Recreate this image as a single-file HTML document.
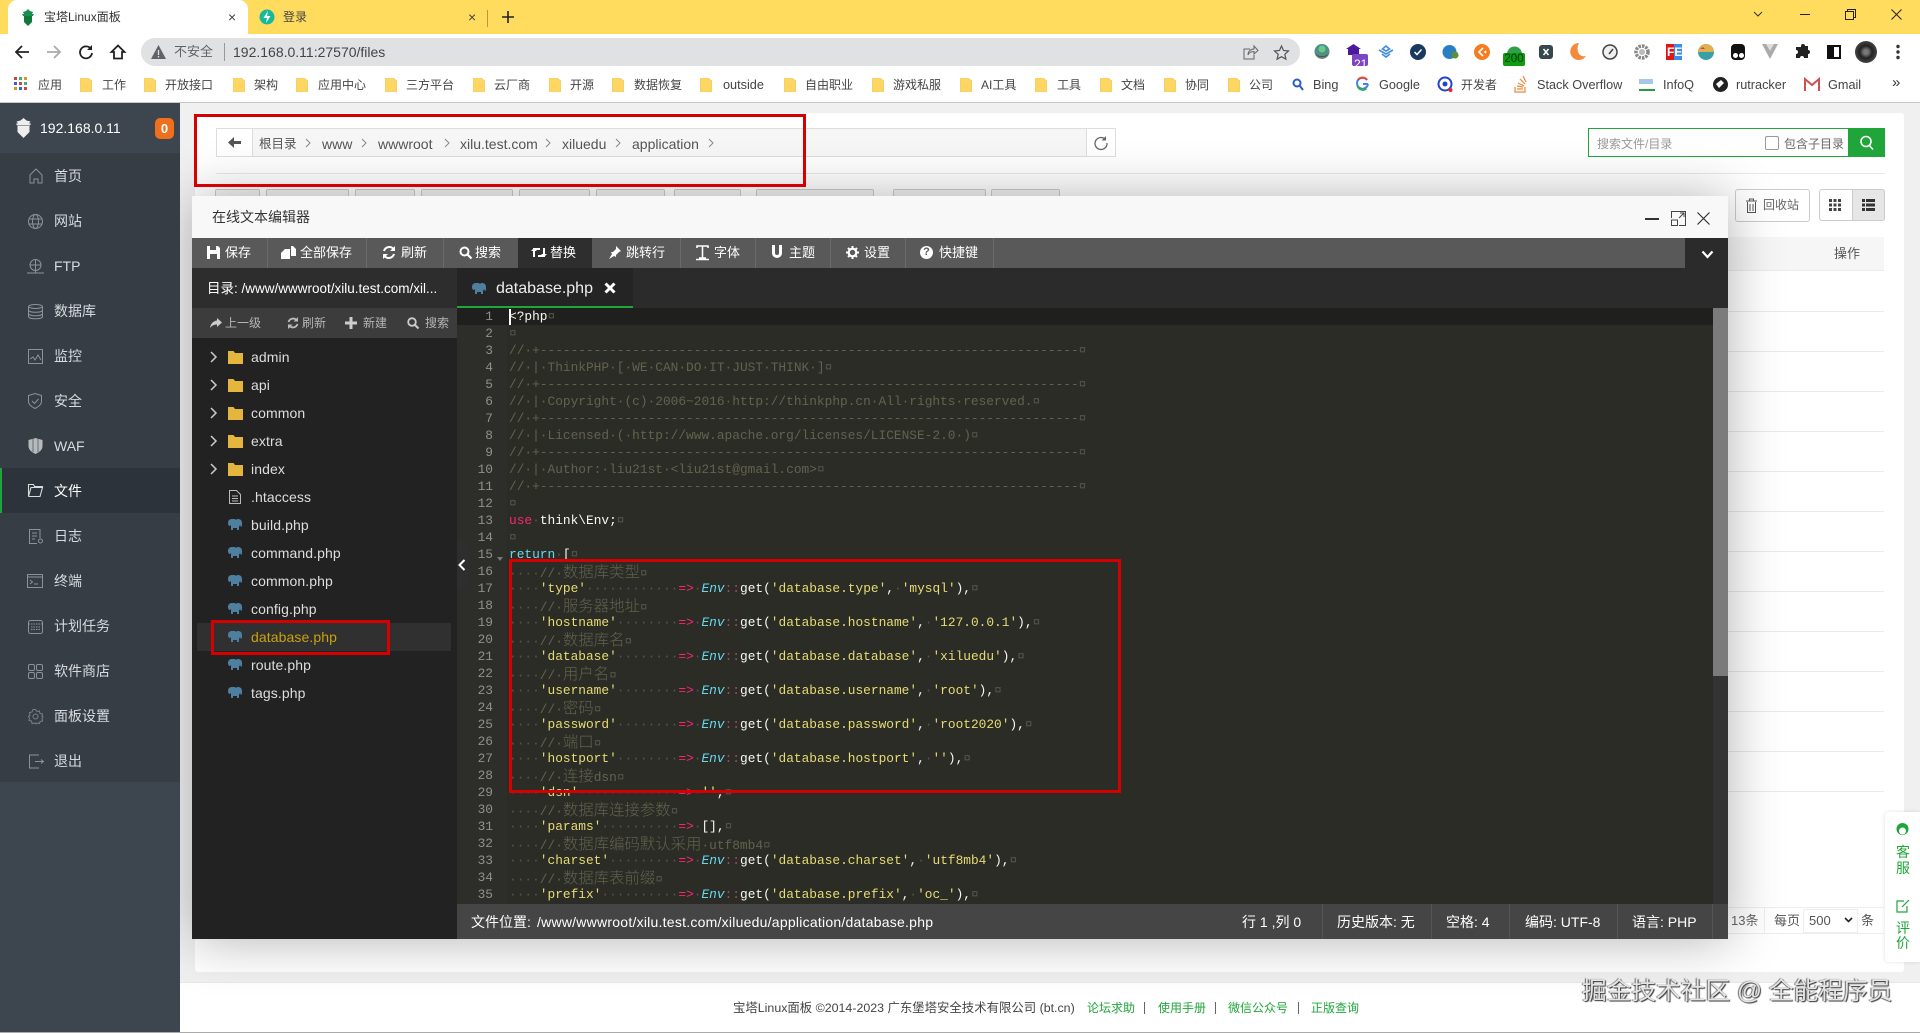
<!DOCTYPE html>
<html lang="zh"><head><meta charset="utf-8"><title>宝塔Linux面板</title>
<style>
*{box-sizing:border-box;margin:0;padding:0}
html,body{width:1920px;height:1033px;overflow:hidden;background:#f0f0f0}
body{position:relative;font:12px/20px "Liberation Sans","Noto Sans CJK SC",sans-serif;color:#333}
.a{position:absolute;white-space:nowrap;line-height:20px}
.r{position:absolute}
svg{position:absolute;overflow:visible}
.side{color:#d8dbde;font-size:14px;left:54px}
.tool{color:#fff;font-size:13px;top:243px}
.act{color:#b5b5b5;font-size:12px;top:313px}
.file{color:#ddd;font-size:14px;left:251px;letter-spacing:.1px}
.sta{color:#fff;font-size:14px;top:912px}
.sep{position:absolute;width:1px;background:#6a6a6a}
.bm{color:#444;font-size:12px;top:75px}
.bl{font-size:12.7px}
.bc{color:#555;font-size:14px;top:134px}
.red{position:absolute;border:3px solid #d60000;z-index:30}
.btn{position:absolute;top:189px;height:12px;border:1px solid #ccc;border-radius:2px;background:#f4f4f4}
.ln{position:absolute;left:1728px;width:156px;height:1px;background:#eaeaea}
#code{position:absolute;left:509px;top:308px;width:1200px;height:596px;overflow:hidden;font:12.84px/17px "Liberation Mono","Noto Sans CJK SC",monospace;color:#f8f8f2;z-index:6}
#code div{height:17px;white-space:pre}
#code i{font-style:normal;color:#54554c}
#code i.v{color:#66d9ef;font-style:italic}
#code .c{color:#63624f}
#code .z{font-size:15.4px;font-family:"Noto Sans CJK SC",sans-serif;line-height:17px;font-weight:300}
#code s{text-decoration:none;color:#e6db74}
#code em{color:#66d9ef;font-style:normal}
#code .k{color:#f92672}
#code .d{color:#a34a66}
#nums{position:absolute;left:457px;top:308px;width:36px;height:596px;overflow:hidden;text-align:right;font:12.84px/17px "Liberation Mono",monospace;color:#8f908a;white-space:pre;z-index:6}
</style></head><body>

<svg width="0" height="0" style="position:absolute"><defs>
<symbol id="fd" viewBox="0 0 12 14"><path d="M0 0h8l4 3v11H0z" fill="#fdd663" stroke="#e9c46a" stroke-width=".6"/></symbol>
<symbol id="yf" viewBox="0 0 15 14"><path d="M0 1h5.500l1.500 2h8v11H0z" fill="#e4b63d"/></symbol>
<symbol id="ph" viewBox="0 0 14 12"><path d="M4 0c-2 0-4 1-4 4 0 2 1 3 2 3l1-1v5h2V9h4v2h2V8l1-2 1 2 1-1V4c0-3-2-4-4-4H9L8 1 7 0z" fill="#4f7f9f"/></symbol>
</defs></svg>

<!-- tab strip -->
<div class="r" style="left:0;top:0;width:1920px;height:34px;background:#ffdc5e"></div>
<div class="r" style="left:8px;top:0;width:240px;height:34px;background:#fff;border-radius:9px 9px 0 0"></div>
<svg style="left:21px;top:9px" width="14" height="17" viewBox="0 0 14 17"><path d="M7 0l2 2 3 1-1 2h2l-1 2H2L1 5h2L2 3l3-1z" fill="#1a8f50"/><path d="M3 7h8v6l-4 4-4-4z" fill="#0f7a3b"/></svg>
<span class="a" style="left:44px;top:7px;color:#333">宝塔Linux面板</span>
<span class="a" style="left:228px;top:7px;font-size:14px;color:#444">×</span>
<svg style="left:259px;top:8px" width="16" height="18" viewBox="0 0 16 18"><circle cx="8" cy="9" r="7.500" fill="#18b89a"/><path d="M9 3L4.500 10H8l-1 5 4.500-7H8z" fill="#fff"/></svg>
<span class="a" style="left:283px;top:7px;color:#444">登录</span>
<span class="a" style="left:468px;top:7px;font-size:14px;color:#444">×</span>
<div class="r" style="left:487px;top:10px;width:1px;height:17px;background:#b59a3a"></div>
<svg style="left:502px;top:11px" width="12" height="12"><path d="M6 0v12M0 6h12" stroke="#222" stroke-width="1.600"/></svg>
<svg style="left:1753px;top:11px" width="10" height="7"><path d="M1 1l4 4 4-4" fill="none" stroke="#333"/></svg>
<div class="r" style="left:1800px;top:14px;width:10px;height:1px;background:#222"></div>
<svg style="left:1845px;top:9px" width="11" height="11"><path d="M.5 2.500h8v8h-8zM2.500 2.500v-2h8v8h-2" fill="none" stroke="#222"/></svg>
<svg style="left:1891px;top:9px" width="11" height="11"><path d="M.5.500l10 10M10.500.500l-10 10" stroke="#222"/></svg>

<!-- toolbar -->
<div class="r" style="left:0;top:34px;width:1920px;height:68px;background:#fff"></div>
<div class="r" style="left:0;top:102px;width:1920px;height:1px;background:#c8c8c8"></div>
<svg style="left:14px;top:44px" width="16" height="16"><path d="M15 8H2M8 2L2 8l6 6" fill="none" stroke="#222" stroke-width="1.800"/></svg>
<svg style="left:46px;top:44px" width="16" height="16"><path d="M1 8h13M8 2l6 6-6 6" fill="none" stroke="#aaa" stroke-width="1.800"/></svg>
<svg style="left:78px;top:44px" width="16" height="16"><path d="M13 5a6 6 0 1 0 1 4" fill="none" stroke="#222" stroke-width="1.800"/><path d="M14 1v5H9z" fill="#222"/></svg>
<svg style="left:110px;top:44px" width="16" height="16"><path d="M8 1.500L1.500 8H4v6.500h8V8h2.500z" fill="none" stroke="#222" stroke-width="1.800"/></svg>
<div class="r" style="left:141px;top:38px;width:1159px;height:28px;background:#dfe1e3;border-radius:14px"></div>
<svg style="left:151px;top:45px" width="15" height="14"><path d="M7.500 0L15 14H0z" fill="#5f6368"/><path d="M7.500 5v5M7.500 11v1.500" stroke="#dfe1e3" stroke-width="1.300"/></svg>
<span class="a" style="left:174px;top:42px;font-size:13px;color:#5f6368">不安全</span>
<div class="r" style="left:224px;top:43px;width:1px;height:18px;background:#999"></div>
<span class="a" style="left:233px;top:42px;font-size:14px;color:#444">192.168.0.11:27570/files</span>
<svg style="left:1243px;top:45px" width="15" height="15"><path d="M7 4H1v10h10v-4M5 10c0-4 3-6 6-6V1l4 4.500L11 9V6.500c-3 0-5 1-6 3.500z" fill="none" stroke="#666"/></svg>
<svg style="left:1274px;top:45px" width="15" height="15"><path d="M7.500 1l2 4.500 5 .5-3.700 3.300 1.100 4.900-4.400-2.500-4.400 2.500 1.100-4.900L.5 6l5-.5z" fill="none" stroke="#555" stroke-width="1.200"/></svg>
<!-- extensions -->
<svg style="left:1314px;top:43px" width="16" height="17"><circle cx="8" cy="8.500" r="7.500" fill="#4f8f86"/><path d="M2 11c3 3 9 3 12 0-1 4-11 4-12 0z" fill="#8b2a2a"/><circle cx="8" cy="6" r="3.500" fill="#66c98c"/></svg>
<svg style="left:1346px;top:43px" width="22" height="24"><path d="M7.500 1l7.500 5H0z" fill="#4b1a9a"/><path d="M2 6h11v6H2z" fill="#4b1a9a"/><rect x="6" y="11" width="16" height="12" rx="2" fill="#7b45c4"/></svg>
<span class="a" style="left:1354px;top:50px;font-size:12px;color:#fff;line-height:28px">21</span>
<svg style="left:1378px;top:44px" width="16" height="16"><path d="M1 6l7 4 7-4M4 10l4 3 4-3M8 2L4.500 5 8 7l3.500-2z" fill="none" stroke="#4a90d9" stroke-width="1.700"/></svg>
<svg style="left:1410px;top:44px" width="16" height="16"><circle cx="8" cy="8" r="8" fill="#19395f"/><path d="M4.500 8l2.500 2.500L11.500 5.500" fill="none" stroke="#fff" stroke-width="1.500"/></svg>
<svg style="left:1442px;top:44px" width="17" height="16"><circle cx="7.500" cy="8" r="7" fill="#2a7fc1"/><circle cx="13" cy="11" r="3.500" fill="#5b8f3a"/></svg>
<svg style="left:1474px;top:44px" width="16" height="16"><circle cx="8" cy="8" r="8" fill="#f57c1f"/><path d="M9 4L5 8l4 4M12 7l-1 1 1 1" fill="none" stroke="#fff" stroke-width="1.600"/></svg>
<svg style="left:1503px;top:44px" width="22" height="22"><path d="M4 10a7.500 7.500 0 0 1 15 0z" fill="#30a04a"/><rect y="9" width="22" height="13" rx="2" fill="#0c9c0c"/></svg>
<span class="a" style="left:1503px;top:49px;font-size:11.500px;color:#032;width:22px;text-align:center">200</span>
<svg style="left:1539px;top:45px" width="14" height="14"><rect width="14" height="14" rx="3" fill="#37474f"/><path d="M4.500 4l5 6M9.500 4l-5 6" stroke="#fff" stroke-width="1.500"/></svg>
<svg style="left:1570px;top:43px" width="16" height="17"><path d="M9 0a8.500 8.500 0 1 0 7 13C10 15 5 8 9 0z" fill="#f58a3c"/></svg>
<svg style="left:1602px;top:44px" width="16" height="16"><circle cx="8" cy="8" r="7" fill="#f0f0f0" stroke="#444" stroke-width="1.500"/><path d="M7 10l4-5" stroke="#444" stroke-width="1.500"/></svg>
<svg style="left:1634px;top:44px" width="16" height="16"><circle cx="8" cy="8" r="6" fill="none" stroke="#888" stroke-width="3.500" stroke-dasharray="2.500 1"/><circle cx="8" cy="8" r="3" fill="#bbb"/></svg>
<div class="r" style="left:1666px;top:44px;width:8px;height:16px;background:#e01515"></div><div class="r" style="left:1674px;top:44px;width:8px;height:16px;background:#3c8cf0"></div>
<span class="a" style="left:1667px;top:42px;color:#fff;font-weight:bold;font-size:12px">FE</span>
<svg style="left:1698px;top:44px" width="16" height="16"><circle cx="8" cy="8" r="8" fill="#3aa0a8"/><path d="M0 8a8 8 0 0 1 16 0z" fill="#e0b050"/><path d="M2 5l3-2 2 2" fill="#c44"/></svg>
<div class="r" style="left:1731px;top:44px;width:14px;height:16px;background:#111;border-radius:4px"></div>
<div class="r" style="left:1733px;top:53px;width:5px;height:5px;background:#fff;border-radius:50%"></div><div class="r" style="left:1739px;top:53px;width:5px;height:5px;background:#fff;border-radius:50%"></div>
<svg style="left:1762px;top:44px" width="16" height="15"><path d="M0 0h16L8 15z" fill="#aaa"/><path d="M4 0h8L8 7z" fill="#ddd"/></svg>
<svg style="left:1795px;top:44px" width="16" height="16"><path d="M6 2a2 2 0 0 1 4 0h3v4a2 2 0 0 1 0 4v4H9a2 2 0 0 0-4 0H1v-4a2 2 0 0 0 0-4V3h5z" fill="#222"/></svg>
<div class="r" style="left:1827px;top:45px;width:14px;height:14px;border:2px solid #111;border-left-width:7px"></div>
<div class="r" style="left:1855px;top:41px;width:22px;height:22px;border-radius:50%;background:radial-gradient(#777 15%,#222 40%,#444 70%,#222)"></div>
<svg style="left:1896px;top:44px" width="4" height="16"><circle cx="2" cy="2.500" r="1.700" fill="#333"/><circle cx="2" cy="8" r="1.700" fill="#333"/><circle cx="2" cy="13.500" r="1.700" fill="#333"/></svg>

<!-- bookmarks -->
<svg style="left:14px;top:77px" width="14" height="14"><g fill="#c44"><rect width="3" height="3"/><rect x="5" width="3" height="3" fill="#4a7"/><rect x="10" width="3" height="3" fill="#c93"/><rect y="5" width="3" height="3" fill="#36c"/><rect x="5" y="5" width="3" height="3"/><rect x="10" y="5" width="3" height="3" fill="#4a7"/><rect y="10" width="3" height="3" fill="#c93"/><rect x="5" y="10" width="3" height="3" fill="#36c"/><rect x="10" y="10" width="3" height="3"/></g></svg>
<span class="a bm" style="left:38px">应用</span>
<svg style="left:80px;top:78px" width="12" height="14"><use href="#fd"/></svg><span class="a bm" style="left:102px">工作</span>
<svg style="left:144px;top:78px" width="12" height="14"><use href="#fd"/></svg><span class="a bm" style="left:165px">开放接口</span>
<svg style="left:233px;top:78px" width="12" height="14"><use href="#fd"/></svg><span class="a bm" style="left:254px">架构</span>
<svg style="left:296px;top:78px" width="12" height="14"><use href="#fd"/></svg><span class="a bm" style="left:318px">应用中心</span>
<svg style="left:385px;top:78px" width="12" height="14"><use href="#fd"/></svg><span class="a bm" style="left:406px">三方平台</span>
<svg style="left:473px;top:78px" width="12" height="14"><use href="#fd"/></svg><span class="a bm" style="left:494px">云厂商</span>
<svg style="left:549px;top:78px" width="12" height="14"><use href="#fd"/></svg><span class="a bm" style="left:570px">开源</span>
<svg style="left:612px;top:78px" width="12" height="14"><use href="#fd"/></svg><span class="a bm" style="left:634px">数据恢复</span>
<svg style="left:700px;top:78px" width="12" height="14"><use href="#fd"/></svg><span class="a bm bl" style="left:723px">outside</span>
<svg style="left:784px;top:78px" width="12" height="14"><use href="#fd"/></svg><span class="a bm" style="left:805px">自由职业</span>
<svg style="left:872px;top:78px" width="12" height="14"><use href="#fd"/></svg><span class="a bm" style="left:893px">游戏私服</span>
<svg style="left:960px;top:78px" width="12" height="14"><use href="#fd"/></svg><span class="a bm" style="left:981px">AI工具</span>
<svg style="left:1035px;top:78px" width="12" height="14"><use href="#fd"/></svg><span class="a bm" style="left:1057px">工具</span>
<svg style="left:1100px;top:78px" width="12" height="14"><use href="#fd"/></svg><span class="a bm" style="left:1121px">文档</span>
<svg style="left:1164px;top:78px" width="12" height="14"><use href="#fd"/></svg><span class="a bm" style="left:1185px">协同</span>
<svg style="left:1228px;top:78px" width="12" height="14"><use href="#fd"/></svg><span class="a bm" style="left:1249px">公司</span>
<svg style="left:1292px;top:78px" width="12" height="14"><circle cx="5" cy="5" r="3.500" fill="none" stroke="#2b5fc7" stroke-width="2"/><path d="M8 8l3 4" stroke="#2b5fc7" stroke-width="2"/></svg><span class="a bm bl" style="left:1313px">Bing</span>
<svg style="left:1356px;top:77px" width="13" height="14"><path d="M12 7H7M11 3a5.500 5.500 0 1 0 1 4" fill="none" stroke="#3f83f3" stroke-width="2"/><path d="M2 3a5.500 5.500 0 0 1 9 0" fill="none" stroke="#e94335" stroke-width="2"/><path d="M1.500 8.500a5.500 5.500 0 0 0 9 3" fill="none" stroke="#34a853" stroke-width="2"/></svg><span class="a bm bl" style="left:1379px">Google</span>
<svg style="left:1437px;top:76px" width="16" height="16"><circle cx="8" cy="8" r="6.500" fill="none" stroke="#2244cc" stroke-width="2"/><circle cx="8" cy="8" r="2.500" fill="#2244cc"/><circle cx="13.500" cy="14" r="2" fill="#e22"/></svg><span class="a bm" style="left:1461px">开发者</span>
<svg style="left:1514px;top:75px" width="13" height="18"><path d="M1 12v5h10v-5M3 14h6M3 11l6 1M4 8l6 3M6 4l5 5M9 1l3 6" fill="none" stroke="#e8893a" stroke-width="1.200"/></svg><span class="a bm bl" style="left:1537px">Stack Overflow</span>
<div class="r" style="left:1639px;top:89px;width:16px;height:2px;background:#2a9d3a"></div><div class="r" style="left:1639px;top:79px;width:14px;height:5px;background:#a5c7e8"></div><span class="a bm bl" style="left:1663px">InfoQ</span>
<svg style="left:1713px;top:77px" width="15" height="15"><circle cx="7.500" cy="7.500" r="7.500" fill="#222"/><path d="M3 7l5-4 3 3-5 5z" fill="#fff"/></svg><span class="a bm bl" style="left:1736px">rutracker</span>
<svg style="left:1804px;top:78px" width="16" height="13"><path d="M1 13V1l7 6 7-6v12" fill="none" stroke="#d05050" stroke-width="2"/></svg><span class="a bm bl" style="left:1828px">Gmail</span>
<span class="a" style="left:1892px;top:73px;font-size:15px;color:#333">»</span>

<!-- main backdrop -->
<div class="r" style="left:180px;top:103px;width:1740px;height:930px;background:#f0f0f0"></div>
<div class="r" style="left:195px;top:113px;width:1709px;height:859px;background:#fff;border-radius:3px"></div>
<div class="r" style="left:180px;top:982px;width:1740px;height:50px;background:#fff;border-top:1px solid #e8e8e8"></div>
<div class="r" style="left:0;top:1032px;width:1920px;height:1px;background:#aaa;z-index:8"></div>

<!-- breadcrumb -->
<div class="r" style="left:216px;top:128px;width:900px;height:29px;background:#f6f6f6;border:1px solid #ddd"></div>
<div class="r" style="left:216px;top:128px;width:37px;height:29px;background:#fff;border:1px solid #ddd"></div>
<svg style="left:228px;top:137px" width="13" height="11"><path d="M13 5.500H5M6 0L0 5.500 6 11V7h7V4H6z" fill="#555"/></svg>
<div class="r" style="left:1086px;top:128px;width:30px;height:29px;background:#fff;border:1px solid #ddd"></div>
<svg style="left:1094px;top:136px" width="14" height="14"><path d="M11 3a6 6 0 1 0 2 4" fill="none" stroke="#666" stroke-width="1.300"/><path d="M12 0v4.500H7.500" fill="#666"/></svg>
<span class="a" style="left:259px;top:134px;color:#555;font-size:12.500px">根目录</span>
<span class="a bc" style="left:322px">www</span>
<span class="a bc" style="left:378px">wwwroot</span>
<span class="a bc" style="left:460px">xilu.test.com</span>
<span class="a bc" style="left:562px">xiluedu</span>
<span class="a bc" style="left:632px">application</span>
<svg style="left:0;top:0" width="1" height="1"><path d="M306 139l4 4-4 4M362 139l4 4-4 4M445 139l4 4-4 4M546 139l4 4-4 4M616 139l4 4-4 4M709 139l4 4-4 4" fill="none" stroke="#888"/></svg>

<div class="r" style="left:1588px;top:128px;width:261px;height:29px;background:#fff;border:1px solid #20a53a"></div>
<div class="r" style="left:1849px;top:128px;width:36px;height:29px;background:#20a53a"></div>
<svg style="left:1859px;top:135px" width="16" height="16"><circle cx="7" cy="6.500" r="5" fill="none" stroke="#fff" stroke-width="1.600"/><path d="M10.500 10.500l3.500 4" stroke="#fff" stroke-width="1.600"/></svg>
<span class="a" style="left:1597px;top:134px;color:#999">搜索文件/目录</span>
<div class="r" style="left:1765px;top:136px;width:14px;height:14px;background:#fff;border:1px solid #999;border-radius:2px"></div>
<span class="a" style="left:1784px;top:134px;color:#666">包含子目录</span>
<div class="r" style="left:216px;top:173px;width:1669px;height:1px;background:#e8e8e8"></div>

<!-- button row behind -->
<div class="btn" style="left:215px;width:45px"></div><div class="btn" style="left:266px;width:83px"></div><div class="btn" style="left:355px;width:60px"></div><div class="btn" style="left:421px;width:92px"></div><div class="btn" style="left:519px;width:71px"></div><div class="btn" style="left:596px;width:69px"></div><div class="btn" style="left:674px;width:67px"></div><div class="btn" style="left:756px;width:118px"></div><div class="btn" style="left:893px;width:93px"></div><div class="btn" style="left:991px;width:69px"></div>

<!-- right side table -->
<div class="r" style="left:1735px;top:189px;width:75px;height:33px;background:#fff;border:1px solid #ccc;border-radius:3px"></div>
<svg style="left:1746px;top:198px" width="11" height="15"><path d="M0 3h11M3.500 3V1h4v2M1.500 4v10.500h8V4M4 6v7M7 6v7" fill="none" stroke="#555"/></svg>
<span class="a" style="left:1763px;top:195px;color:#666">回收站</span>
<div class="r" style="left:1819px;top:189px;width:66px;height:32px;background:#fff;border:1px solid #ccc;border-radius:3px"></div>
<div class="r" style="left:1852px;top:189px;width:33px;height:32px;background:#e6e6e6;border:1px solid #ccc;border-radius:0 3px 3px 0"></div>
<svg style="left:1829px;top:199px" width="12" height="12"><path d="M0 0h3v3H0zM4.500 0h3v3h-3zM9 0h3v3H9zM0 4.500h3v3H0zM4.500 4.500h3v3h-3zM9 4.500h3v3H9zM0 9h3v3H0zM4.500 9h3v3h-3zM9 9h3v3H9z" fill="#444"/></svg>
<svg style="left:1862px;top:199px" width="13" height="12"><path d="M0 0h3v3H0zM4 0h9v3H4zM0 4.500h3v3H0zM4 4.500h9v3H4zM0 9h3v3H0zM4 9h9v3H4z" fill="#333"/></svg>
<div class="r" style="left:1728px;top:237px;width:156px;height:34px;background:#f6f6f6;border-bottom:1px solid #ececec"></div>
<span class="a" style="left:1834px;top:244px;color:#555;font-size:13px">操作</span>
<div class="ln" style="top:311px"></div><div class="ln" style="top:351px"></div><div class="ln" style="top:391px"></div><div class="ln" style="top:431px"></div><div class="ln" style="top:471px"></div><div class="ln" style="top:511px"></div><div class="ln" style="top:551px"></div><div class="ln" style="top:591px"></div><div class="ln" style="top:631px"></div><div class="ln" style="top:671px"></div><div class="ln" style="top:711px"></div><div class="ln" style="top:751px"></div><div class="ln" style="top:791px"></div>
<div class="r" style="left:1728px;top:907px;width:156px;height:27px;background:#fff;border-top:1px solid #eee;border-bottom:1px solid #eee"></div>
<span class="a" style="left:1731px;top:911px;color:#666;font-size:13px">13条</span>
<div class="r" style="left:1764px;top:907px;width:1px;height:27px;background:#eee"></div>
<span class="a" style="left:1774px;top:911px;color:#555;font-size:13px">每页</span>
<div class="r" style="left:1803px;top:909px;width:55px;height:24px;background:#fff;border:1px solid #eee"></div>
<span class="a" style="left:1809px;top:911px;color:#555;font-size:13px">500</span>
<svg style="left:1844px;top:917px" width="9" height="6"><path d="M1 1l3.500 3.500L8 1" fill="none" stroke="#222" stroke-width="1.600"/></svg>
<span class="a" style="left:1861px;top:911px;color:#555;font-size:13px">条</span>

<!-- float -->
<div class="r" style="left:1885px;top:812px;width:35px;height:150px;background:#fff;border-radius:4px 0 0 4px;box-shadow:0 0 4px rgba(0,0,0,.12)"></div>
<svg style="left:1895px;top:822px" width="15" height="16"><circle cx="7.500" cy="7" r="6" fill="#20a53a"/><circle cx="7.500" cy="9" r="3.500" fill="#fff"/></svg>
<span class="a" style="left:1896px;top:842px;color:#20a53a;font-size:14px">客</span>
<span class="a" style="left:1896px;top:858px;color:#20a53a;font-size:14px">服</span>
<svg style="left:1896px;top:899px" width="14" height="14"><path d="M11 7v6H1V2h7M6 8l7-7" fill="none" stroke="#20a53a" stroke-width="1.200"/></svg>
<span class="a" style="left:1896px;top:918px;color:#20a53a;font-size:14px">评</span>
<span class="a" style="left:1896px;top:933px;color:#20a53a;font-size:14px">价</span>

<!-- footer -->
<span class="a" style="left:733px;top:998px;color:#444;font-size:12.400px">宝塔Linux面板 ©2014-2023 广东堡塔安全技术有限公司 (bt.cn)</span>
<span class="a" style="left:1087px;top:998px;color:#20a53a">论坛求助</span>
<div class="r" style="left:1144px;top:1002px;width:1px;height:12px;background:#666"></div>
<span class="a" style="left:1158px;top:998px;color:#20a53a">使用手册</span>
<div class="r" style="left:1215px;top:1002px;width:1px;height:12px;background:#666"></div>
<span class="a" style="left:1228px;top:998px;color:#20a53a">微信公众号</span>
<div class="r" style="left:1298px;top:1002px;width:1px;height:12px;background:#666"></div>
<span class="a" style="left:1311px;top:998px;color:#20a53a">正版查询</span>
<span class="a" style="left:1582px;top:979px;font-size:24.700px;line-height:26px;color:#e4e4e4;text-shadow:1px 1px 1px #333,-1px 0 1px #666;z-index:40">掘金技术社区 @ 全能程序员</span>

<!-- sidebar -->
<div class="r" style="left:0;top:103px;width:180px;height:930px;background:#3d454e;z-index:5">
<div class="r" style="left:0;top:50px;width:180px;height:629px;background:#363d45"></div>
<div class="r" style="left:0;top:365px;width:180px;height:45px;background:#2c333a"></div>
<div class="r" style="left:0;top:365px;width:2px;height:45px;background:#20a53a"></div>
</div>
<div style="position:absolute;left:0;top:0;z-index:6">
<svg style="left:15px;top:118px" width="17" height="20"><path d="M8.500 0l3 2.500 4 1-1.500 2h2l-1 2H2l-1-2h2l-1.500-2 4-1z" fill="#eee"/><path d="M2.500 8h12v6l-6 6-6-6z" fill="#eee"/></svg>
<span class="a" style="left:40px;top:118px;color:#fff;font-size:14px">192.168.0.11</span>
<div class="r" style="left:155px;top:118px;width:19px;height:21px;background:#f06f1d;border-radius:5px;color:#fff;font:bold 13px/21px 'Liberation Sans';text-align:center">0</div>

<svg style="left:28px;top:168px" width="16" height="16" fill="none" stroke="#8c9299"><path d="M8 1L2 7v8h4v-4h4v4h4V7z"/></svg>
<svg style="left:28px;top:214px" width="15" height="15" fill="none" stroke="#8c9299"><circle cx="7.500" cy="7.500" r="7"/><ellipse cx="7.500" cy="7.500" rx="3" ry="7"/><path d="M1 5h13M1 10h13"/></svg>
<svg style="left:27px;top:259px" width="17" height="15" fill="none" stroke="#8c9299"><circle cx="8.500" cy="6" r="5.500"/><path d="M3 6h11M8.500 1v10M0 14h17M8.500 11v3"/></svg>
<svg style="left:28px;top:304px" width="15" height="15" fill="none" stroke="#8c9299"><ellipse cx="7.500" cy="2.500" rx="7" ry="2"/><path d="M.5 2.500v10c0 3 14 3 14 0v-10M.5 6c0 3 14 3 14 0M.5 9.500c0 3 14 3 14 0"/></svg>
<svg style="left:28px;top:349px" width="15" height="15" fill="none" stroke="#8c9299"><path d="M.5.500h14v14H.5zM2 10l3-2 2 3 3-5 3 5"/></svg>
<svg style="left:28px;top:393px" width="14" height="16" fill="none" stroke="#8c9299"><path d="M7 .5l6.500 2v6C13.500 12 10 14 7 15.500 4 14 .5 12 .5 8.500v-6zM4 8l2.500 2.500L10.500 6"/></svg>
<svg style="left:28px;top:438px" width="15" height="16"><path d="M7.500 0l7 2v6c0 4-3 6-7 8-4-2-7-4-7-8V2z" fill="#b6babd"/><path d="M5 0v14M10 0v14" stroke="#363d45" stroke-width=".6"/></svg>
<svg style="left:28px;top:484px" width="15" height="13" fill="none" stroke="#d8dbde" stroke-width="1.100"><path d="M.5 12.500V.5h5l1 2h8v1H3l-2.500 9zm0 0h11.500l2.500-9"/></svg>
<svg style="left:29px;top:529px" width="15" height="15" fill="none" stroke="#8c9299"><path d="M11 9V.5H.5v14H8M3 4h5M3 7h5M3 10h3"/><circle cx="11.500" cy="12" r="2"/></svg>
<svg style="left:27px;top:574px" width="16" height="14" fill="none" stroke="#8c9299"><path d="M.5.500h15v13H.5zM.5 3h15M3 6l2.500 2L3 10M7 10h4"/></svg>
<svg style="left:28px;top:619px" width="15" height="15" fill="none" stroke="#8c9299"><rect x=".5" y="1.500" width="14" height="13" rx="2"/><path d="M.5 5h14M3 8h9M3 10.500h9" stroke-dasharray="1.500 1"/></svg>
<svg style="left:28px;top:664px" width="15" height="15" fill="none" stroke="#8c9299"><rect x=".5" y=".5" width="6" height="6" rx="1.500"/><rect x="8.500" y=".5" width="6" height="6" rx="1.500"/><rect x=".5" y="8.500" width="6" height="6" rx="1.500"/><rect x="8.500" y="8.500" width="6" height="6" rx="1.500"/></svg>
<svg style="left:28px;top:709px" width="15" height="15" fill="none" stroke="#7b8188"><circle cx="7.500" cy="7.500" r="2.500"/><path d="M7.500.5l1.500 2 2.500-.5.500 2.500 2.500.500-.5 2.500 1 .5-1 1.500.5 2.500-2.500.5-.5 2-2.500-.5-1 1-1.500-1-2.500.5-.5-2.500-2.500-.5.5-2.500L.5 7.500l1.500-1.500-.5-2.500L4 3l1-2.500z"/></svg>
<svg style="left:29px;top:754px" width="15" height="15" fill="none" stroke="#8c9299"><path d="M10 1H.5v13H10M6 7.500h8M12 5.500l2.500 2-2.500 2"/></svg>
<span class="a side" style="top:166px">首页</span>
<span class="a side" style="top:211px">网站</span>
<span class="a side" style="top:256px">FTP</span>
<span class="a side" style="top:301px">数据库</span>
<span class="a side" style="top:346px">监控</span>
<span class="a side" style="top:391px">安全</span>
<span class="a side" style="top:436px">WAF</span>
<span class="a side" style="top:481px;color:#fff">文件</span>
<span class="a side" style="top:526px">日志</span>
<span class="a side" style="top:571px">终端</span>
<span class="a side" style="top:616px">计划任务</span>
<span class="a side" style="top:661px">软件商店</span>
<span class="a side" style="top:706px">面板设置</span>
<span class="a side" style="top:751px">退出</span>
</div>

<!-- modal -->
<div class="r" style="left:192px;top:196px;width:1536px;height:743px;background:#222;box-shadow:1px 1px 50px rgba(0,0,0,.3);z-index:3"></div>
<div style="position:absolute;left:0;top:0;z-index:4">
<div class="r" style="left:192px;top:196px;width:1536px;height:42px;background:#f8f8f8"></div>
<span class="a" style="left:212px;top:207px;font-size:14px;color:#333">在线文本编辑器</span>
<div class="r" style="left:1645px;top:218px;width:14px;height:2px;background:#333"></div>
<svg style="left:1671px;top:211px" width="15" height="15" fill="none" stroke="#444"><path d="M.5 7V.5h14v14H8M.5 9h6v5.500h-6zM8 7l5-5M9 2h4v4"/></svg>
<svg style="left:1697px;top:212px" width="13" height="13"><path d="M.5.500l12 12M12.500.500l-12 12" stroke="#333" stroke-width="1.200"/></svg>

<div class="r" style="left:192px;top:238px;width:1493px;height:30px;background:#595959"></div>
<div class="r" style="left:1685px;top:238px;width:43px;height:30px;background:#2b2b2b"></div>
<svg style="left:1701px;top:250px" width="13" height="9"><path d="M1.500 1.500L6.500 7l5-5.500" fill="none" stroke="#fff" stroke-width="2.200"/></svg>
<div class="r" style="left:518px;top:238px;width:74px;height:30px;background:#2e2e2e"></div>
<div class="sep" style="left:267px;top:238px;height:30px"></div><div class="sep" style="left:366px;top:238px;height:30px"></div><div class="sep" style="left:443px;top:238px;height:30px"></div><div class="sep" style="left:680px;top:238px;height:30px"></div><div class="sep" style="left:755px;top:238px;height:30px"></div><div class="sep" style="left:830px;top:238px;height:30px"></div><div class="sep" style="left:905px;top:238px;height:30px"></div><div class="sep" style="left:993px;top:238px;height:30px"></div>
<svg style="left:207px;top:246px" width="13" height="13"><path d="M0 0h11l2 2v11H0z" fill="#fff"/><path d="M3 0h6v4H3zM3 8h7v5H3z" fill="#595959"/></svg>
<svg style="left:281px;top:246px" width="15" height="13"><path d="M4 3h5v10H0V7zM10 0h2l3 3v7h-5z" fill="#fff"/></svg>
<svg style="left:382px;top:246px" width="14" height="13"><path d="M2 5a5.500 5.500 0 0 1 9.500-2M12 8a5.500 5.500 0 0 1-9.500 2" fill="none" stroke="#fff" stroke-width="2"/><path d="M13 0v5H8zM1 13V8h5z" fill="#fff"/></svg>
<svg style="left:459px;top:246px" width="13" height="13"><circle cx="5.500" cy="5.500" r="4" fill="none" stroke="#fff" stroke-width="2"/><path d="M8.500 8.500l4 4" stroke="#fff" stroke-width="2.200"/></svg>
<svg style="left:531px;top:247px" width="16" height="11"><path d="M3 10V2h6M13 1v8H7" fill="none" stroke="#fff" stroke-width="2"/><path d="M0 4l3-3 3 3zM10 7l3 3 3-3z" fill="#fff"/></svg>
<svg style="left:608px;top:246px" width="13" height="13"><path d="M8 0l5 5-2 1-3 3 0 2-2-1-5 3 3-5-1-2 2 0 3-3z" fill="#fff"/></svg>
<svg style="left:696px;top:245px" width="13" height="15"><path d="M1 3V1h11v2M6.500 1v12M3 13h7M0 14.500h13" fill="none" stroke="#fff" stroke-width="1.600"/></svg>
<svg style="left:771px;top:245px" width="12" height="14"><path d="M1 0h3v8a2 2 0 0 0 4 0V0h3v8a5 5 0 0 1-10 0z" fill="#fff"/></svg>
<svg style="left:846px;top:246px" width="13" height="13"><circle cx="6.500" cy="6.500" r="3.800" fill="none" stroke="#fff" stroke-width="2.200"/><path d="M6.500 0v2M6.500 11v2M0 6.500h2M11 6.500h2M2 2l1.500 1.500M9.500 9.500L11 11M11 2L9.500 3.500M3.500 9.500L2 11" stroke="#fff" stroke-width="2"/></svg>
<div class="r" style="left:920px;top:246px;width:13px;height:13px;background:#fff;border-radius:50%;color:#595959;font:bold 11px/13px 'Liberation Sans';text-align:center">?</div>
<span class="a tool" style="left:225px">保存</span>
<span class="a tool" style="left:300px">全部保存</span>
<span class="a tool" style="left:401px">刷新</span>
<span class="a tool" style="left:475px">搜索</span>
<span class="a tool" style="left:550px">替换</span>
<span class="a tool" style="left:626px">跳转行</span>
<span class="a tool" style="left:714px">字体</span>
<span class="a tool" style="left:789px">主题</span>
<span class="a tool" style="left:864px">设置</span>
<span class="a tool" style="left:939px">快捷键</span>

<!-- left panel -->
<div class="r" style="left:192px;top:268px;width:265px;height:40px;background:#2d2d2d"></div>
<span class="a" style="left:207px;top:279px;color:#fff;font-size:13.500px">目录: /www/wwwroot/xilu.test.com/xil...</span>
<div class="r" style="left:192px;top:308px;width:265px;height:30px;background:#3c3c3c"></div>
<svg style="left:210px;top:318px" width="12" height="10"><path d="M7 0l5 4.500L7 9V6.500C4 6.500 2 7.500 0 10c.5-4 3-7 7-7.500z" fill="#ccc"/></svg>
<svg style="left:287px;top:317px" width="12" height="12"><path d="M1.500 5a4.800 4.800 0 0 1 8-2M10.500 7a4.800 4.800 0 0 1-8 2" fill="none" stroke="#bbb" stroke-width="1.800"/><path d="M11 0v4.500H6.500zM1 12V7.500h4.500z" fill="#bbb"/></svg>
<svg style="left:345px;top:317px" width="12" height="12"><path d="M6 0v12M0 6h12" stroke="#ccc" stroke-width="3"/></svg>
<svg style="left:407px;top:317px" width="12" height="12"><circle cx="5" cy="5" r="3.800" fill="none" stroke="#ccc" stroke-width="1.800"/><path d="M8 8l3.500 3.500" stroke="#ccc" stroke-width="2"/></svg>
<span class="a act" style="left:225px">上一级</span>
<span class="a act" style="left:302px">刷新</span>
<span class="a act" style="left:363px">新建</span>
<span class="a act" style="left:425px">搜索</span>
<div class="r" style="left:197px;top:623px;width:254px;height:28px;background:#303030"></div>
<svg style="left:210px;top:351px" width="7" height="170"><path d="M1 1l5 5-5 5M1 29l5 5-5 5M1 57l5 5-5 5M1 85l5 5-5 5M1 113l5 5-5 5" fill="none" stroke="#ccc" stroke-width="1.500"/></svg>
<svg style="left:228px;top:350px" width="15" height="14"><use href="#yf"/></svg>
<svg style="left:228px;top:378px" width="15" height="14"><use href="#yf"/></svg>
<svg style="left:228px;top:406px" width="15" height="14"><use href="#yf"/></svg>
<svg style="left:228px;top:434px" width="15" height="14"><use href="#yf"/></svg>
<svg style="left:228px;top:462px" width="15" height="14"><use href="#yf"/></svg>
<svg style="left:229px;top:490px" width="12" height="14"><path d="M.5.500h7l4 4v9H.5zM3 6h6M3 8.500h6M3 11h6" fill="none" stroke="#bbb"/></svg>
<svg style="left:228px;top:519px" width="14" height="12"><use href="#ph"/></svg>
<svg style="left:228px;top:547px" width="14" height="12"><use href="#ph"/></svg>
<svg style="left:228px;top:575px" width="14" height="12"><use href="#ph"/></svg>
<svg style="left:228px;top:603px" width="14" height="12"><use href="#ph"/></svg>
<svg style="left:228px;top:631px" width="14" height="12"><use href="#ph"/></svg>
<svg style="left:228px;top:659px" width="14" height="12"><use href="#ph"/></svg>
<svg style="left:228px;top:687px" width="14" height="12"><use href="#ph"/></svg>
<span class="a file" style="top:347px">admin</span>
<span class="a file" style="top:375px">api</span>
<span class="a file" style="top:403px">common</span>
<span class="a file" style="top:431px">extra</span>
<span class="a file" style="top:459px">index</span>
<span class="a file" style="top:487px">.htaccess</span>
<span class="a file" style="top:515px">build.php</span>
<span class="a file" style="top:543px">command.php</span>
<span class="a file" style="top:571px">common.php</span>
<span class="a file" style="top:599px">config.php</span>
<span class="a file" style="top:627px;color:#c9a20e">database.php</span>
<span class="a file" style="top:655px">route.php</span>
<span class="a file" style="top:683px">tags.php</span>

<!-- editor tabs -->
<div class="r" style="left:457px;top:268px;width:1271px;height:40px;background:#2b2b2b"></div>
<div class="r" style="left:457px;top:268px;width:176px;height:40px;background:#242424;border-bottom:2px solid #20a53a"></div>
<svg style="left:472px;top:283px" width="14" height="12"><use href="#ph"/></svg>
<span class="a" style="left:496px;top:279px;font-size:16px;color:#eee">database.php</span>
<svg style="left:604px;top:282px" width="12" height="12"><path d="M1.500 1.500l9 9M10.500 1.500l-9 9" stroke="#fff" stroke-width="3"/></svg>

<!-- editor -->
<div class="r" style="left:457px;top:308px;width:1256px;height:596px;background:#2b2c26"></div>
<div class="r" style="left:457px;top:308px;width:50px;height:596px;background:#2d2e29"></div>
<div class="r" style="left:457px;top:308px;width:1256px;height:17px;background:#1f1f1d"></div>
<div class="r" style="left:1713px;top:308px;width:15px;height:596px;background:#333"></div>
<div class="r" style="left:1713px;top:308px;width:15px;height:368px;background:#7b7b7b"></div>
<div class="r" style="left:457px;top:904px;width:1271px;height:35px;background:#454545"></div>
<span class="a sta" style="left:471px">文件位置:</span>
<span class="a sta" style="left:537px;letter-spacing:.24px">/www/wwwroot/xilu.test.com/xiluedu/application/database.php</span>
<span class="a sta" style="left:1242px">行 1 ,列 0</span>
<span class="a sta" style="left:1337px">历史版本: 无</span>
<span class="a sta" style="left:1446px">空格: 4</span>
<span class="a sta" style="left:1525px">编码: UTF-8</span>
<span class="a sta" style="left:1632px">语言: PHP</span>
<div class="sep" style="left:1322px;top:904px;height:35px;background:#555"></div><div class="sep" style="left:1431px;top:904px;height:35px;background:#555"></div><div class="sep" style="left:1509px;top:904px;height:35px;background:#555"></div><div class="sep" style="left:1617px;top:904px;height:35px;background:#555"></div><div class="sep" style="left:1712px;top:904px;height:35px;background:#555"></div>
</div>

<div id="nums">1
2
3
4
5
6
7
8
9
10
11
12
13
14
15
16
17
18
19
20
21
22
23
24
25
26
27
28
29
30
31
32
33
34
35</div>
<svg style="left:497px;top:557px;z-index:7" width="6" height="5"><path d="M0 0h6L3 4z" fill="#777"/></svg>
<div class="r" style="left:509px;top:309px;width:1.500px;height:16px;background:#fff;z-index:7"></div>

<div id="code">
<div>&lt;?php<i>¤</i></div>
<div><i>¤</i></div>
<div><span class="c">//·+----------------------------------------------------------------------</span><i>¤</i></div>
<div><span class="c">//·|·ThinkPHP·[·WE·CAN·DO·IT·JUST·THINK·]</span><i>¤</i></div>
<div><span class="c">//·+----------------------------------------------------------------------</span><i>¤</i></div>
<div><span class="c">//·|·Copyright·(c)·2006~2016·http://thinkphp.cn·All·rights·reserved.</span><i>¤</i></div>
<div><span class="c">//·+----------------------------------------------------------------------</span><i>¤</i></div>
<div><span class="c">//·|·Licensed·(·http://www.apache.org/licenses/LICENSE-2.0·)</span><i>¤</i></div>
<div><span class="c">//·+----------------------------------------------------------------------</span><i>¤</i></div>
<div><span class="c">//·|·Author:·liu21st·&lt;liu21st@gmail.com&gt;</span><i>¤</i></div>
<div><span class="c">//·+----------------------------------------------------------------------</span><i>¤</i></div>
<div><i>¤</i></div>
<div><span class="k">use</span><i>·</i>think\Env;<i>¤</i></div>
<div><i>¤</i></div>
<div><em>return</em><i>·</i>[<i>¤</i></div>
<div><i>····</i><span class="c">//·<span class="z">数据库类型</span></span><i>¤</i></div>
<div><i>····</i><s>'type'</s><i>············</i><span class="k">=&gt;</span><i>·</i><i class="v">Env</i><span class="d">::</span>get(<s>'database.type'</s>,<i>·</i><s>'mysql'</s>),<i>¤</i></div>
<div><i>····</i><span class="c">//·<span class="z">服务器地址</span></span><i>¤</i></div>
<div><i>····</i><s>'hostname'</s><i>········</i><span class="k">=&gt;</span><i>·</i><i class="v">Env</i><span class="d">::</span>get(<s>'database.hostname'</s>,<i>·</i><s>'127.0.0.1'</s>),<i>¤</i></div>
<div><i>····</i><span class="c">//·<span class="z">数据库名</span></span><i>¤</i></div>
<div><i>····</i><s>'database'</s><i>········</i><span class="k">=&gt;</span><i>·</i><i class="v">Env</i><span class="d">::</span>get(<s>'database.database'</s>,<i>·</i><s>'xiluedu'</s>),<i>¤</i></div>
<div><i>····</i><span class="c">//·<span class="z">用户名</span></span><i>¤</i></div>
<div><i>····</i><s>'username'</s><i>········</i><span class="k">=&gt;</span><i>·</i><i class="v">Env</i><span class="d">::</span>get(<s>'database.username'</s>,<i>·</i><s>'root'</s>),<i>¤</i></div>
<div><i>····</i><span class="c">//·<span class="z">密码</span></span><i>¤</i></div>
<div><i>····</i><s>'password'</s><i>········</i><span class="k">=&gt;</span><i>·</i><i class="v">Env</i><span class="d">::</span>get(<s>'database.password'</s>,<i>·</i><s>'root2020'</s>),<i>¤</i></div>
<div><i>····</i><span class="c">//·<span class="z">端口</span></span><i>¤</i></div>
<div><i>····</i><s>'hostport'</s><i>········</i><span class="k">=&gt;</span><i>·</i><i class="v">Env</i><span class="d">::</span>get(<s>'database.hostport'</s>,<i>·</i><s>''</s>),<i>¤</i></div>
<div><i>····</i><span class="c">//·<span class="z">连接</span>dsn</span><i>¤</i></div>
<div><i>····</i><s>'dsn'</s><i>·············</i><span class="k">=&gt;</span><i>·</i><s>''</s>,<i>¤</i></div>
<div><i>····</i><span class="c">//·<span class="z">数据库连接参数</span></span><i>¤</i></div>
<div><i>····</i><s>'params'</s><i>··········</i><span class="k">=&gt;</span><i>·</i>[],<i>¤</i></div>
<div><i>····</i><span class="c">//·<span class="z">数据库编码默认采用</span>·utf8mb4</span><i>¤</i></div>
<div><i>····</i><s>'charset'</s><i>·········</i><span class="k">=&gt;</span><i>·</i><i class="v">Env</i><span class="d">::</span>get(<s>'database.charset'</s>,<i>·</i><s>'utf8mb4'</s>),<i>¤</i></div>
<div><i>····</i><span class="c">//·<span class="z">数据库表前缀</span></span><i>¤</i></div>
<div><i>····</i><s>'prefix'</s><i>··········</i><span class="k">=&gt;</span><i>·</i><i class="v">Env</i><span class="d">::</span>get(<s>'database.prefix'</s>,<i>·</i><s>'oc_'</s>),<i>¤</i></div>
</div>

<div class="r" style="left:457px;top:540px;width:12px;height:49px;background:#2e2e2e;border-radius:0 10px 10px 0;z-index:7"></div>
<svg style="left:458px;top:559px;z-index:8" width="8" height="12"><path d="M6.500 1L1.500 6l5 5" fill="none" stroke="#fff" stroke-width="2"/></svg>

<!-- red annotation boxes -->
<div class="red" style="left:194px;top:114px;width:612px;height:73px"></div>
<div class="red" style="left:211px;top:620px;width:179px;height:35px"></div>
<div class="red" style="left:509px;top:559px;width:612px;height:234px"></div>
</body></html>
